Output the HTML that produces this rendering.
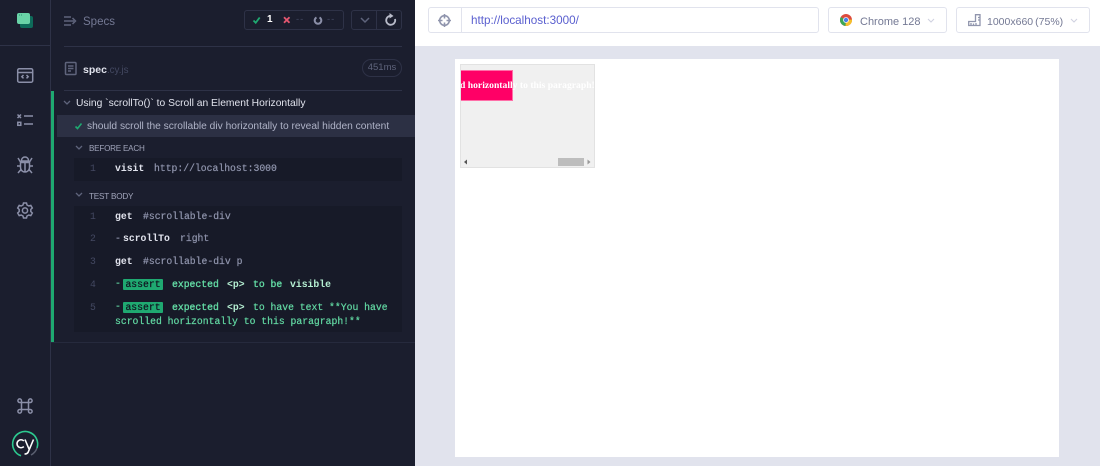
<!DOCTYPE html>
<html><head><meta charset="utf-8"><style>
*{box-sizing:border-box}
html,body{margin:0;padding:0}
body{width:1100px;height:466px;overflow:hidden;position:relative;background:#fff;font-family:"Liberation Sans",sans-serif}
#w{position:absolute;left:0;top:0;width:1100px;height:466px;overflow:hidden;background:#fff;filter:blur(.25px)}
.a{position:absolute;white-space:nowrap}
.m{font-family:"Liberation Mono",monospace;font-size:9.75px;line-height:12px;color:#9095ad;-webkit-text-stroke:.2px currentColor}
.b{font-weight:bold;color:#e1e3ed;-webkit-text-stroke:0}
.g{color:#62d9a3}
.gb{color:#62d9a3;-webkit-text-stroke:.35px #62d9a3}
.v{font-weight:bold;color:#b5efd2;-webkit-text-stroke:0}
.n{font-family:"Liberation Mono",monospace;font-size:9.75px;line-height:12px;color:#434861}
.tag{position:absolute;background:#1fa971;color:#10131f;border-radius:1px;font-family:"Liberation Mono",monospace;font-size:9.75px;line-height:11px;text-align:center;height:11px;width:40px;-webkit-text-stroke:.2px #10131f}
svg{position:absolute;overflow:visible}
</style></head><body><div id="w">
<div class="a" style="left:0;top:0;width:415px;height:466px;background:#1b1e2e"></div>
<div class="a" style="left:50px;top:0;width:1px;height:466px;background:#2e3247"></div>
<div class="a" style="left:0;top:45px;width:50px;height:1px;background:#2e3247"></div>
<div class="a" style="left:64px;top:46px;width:338px;height:1px;background:#2e3247"></div>
<div class="a" style="left:64px;top:90px;width:338px;height:1px;background:#2e3247"></div>
<div class="a" style="left:51px;top:91px;width:3px;height:251px;background:#1fa971"></div>
<div class="a" style="left:51px;top:342px;width:364px;height:1px;background:#262a3d"></div>
<svg style="left:0;top:0" width="50" height="466" fill="none">
<rect x="20" y="16" width="13" height="12" rx="2" fill="#0e6b5a"/><rect x="17" y="13" width="13" height="11" rx="2" fill="#69d3a7"/>
<path d="M19 15h4" stroke="#2a8f70" stroke-width="1" stroke-dasharray="1 1"/>
<g stroke="#8b8fa8" stroke-width="1.500"><rect x="17.700" y="68.700" width="15" height="13.500" rx="1.500"/><path d="M18 72.500H32M23.500 75l-1.700 1.700 1.700 1.700M26.500 75l1.700 1.700-1.700 1.700"/>
<path d="M17.500 114.500l3.500 3.500m0-3.500l-3.500 3.500M24 116H33M24 124H33"/><rect x="17.800" y="122.300" width="3" height="3"/>
<path d="M21.500 160.500a3.500 3.500 0 0 1 7 0v.5h-7zM20.500 162.500h9v5a4.500 4.500 0 0 1-9 0zM25 163v9M18 158l2.500 4M32 158l-2.500 4M17 166H20.500M29.500 166H33M18 173l3-3.500M32 173l-3-3.500"/>
<circle cx="25" cy="210.500" r="2.600"/><path d="M23.500 203h3l.5 2 1.800 1 2-.6 1.500 2.600-1.500 1.400v2.200l1.500 1.400-1.500 2.600-2-.6-1.800 1-.5 2h-3l-.5-2-1.800-1-2 .6-1.500-2.600 1.500-1.400v-2.200l-1.500-1.400 1.500-2.600 2 .6 1.800-1z"/>
<path d="M21.500 402.500h7v7h-7zM21.500 402.500v-1.700a1.800 1.800 0 1 0-1.800 1.700h1.800M28.500 402.500v-1.700a1.800 1.800 0 1 1 1.800 1.700h-1.800M21.500 409.500v1.700a1.800 1.800 0 1 1-1.800-1.700h1.800M28.500 409.500v1.700a1.800 1.800 0 1 0 1.800-1.700h-1.800"/></g>
<path d="M21 455.800A12.500 12.500 0 1 1 37 448" stroke="#2cc98f" stroke-width="1.600"/>
<path d="M37 448A12.500 12.500 0 0 1 31 455" stroke="#5a5f70" stroke-width="1.500"/>
<path d="M23.800 440.900a4 4 0 1 0 0 5.700" stroke="#fff" stroke-width="1.600"/>
<path d="M25 439.500L29 449M33.500 439.500L28 452.500Q27 454 24.500 454" stroke="#fff" stroke-width="1.600"/>
</svg>
<svg style="left:64px;top:16px" width="14" height="12" fill="none" stroke="#5f647c" stroke-width="1.500"><path d="M0 1H7M0 5H10M0 9H7M8.500 2l3 3-3 3"/></svg>
<div class="a" style="left:83px;top:15px;font-size:11.500px;line-height:15px;color:#747994">Specs</div>
<div class="a" style="left:244px;top:10px;width:100px;height:20px;border:1px solid #2e3247;border-radius:3px"></div>
<svg style="left:244px;top:10px" width="100" height="20" fill="none" stroke-width="1.800"><path d="M9.500 10.500l2.200 2.300 4-5.300" stroke="#1fa971"/><path d="M40 7.200l5.500 5.500m0-5.500l-5.500 5.500" stroke="#e45770"/><path d="M72.500 7.500a3.300 3.300 0 1 0 3 0" stroke="#8b8fa8" stroke-width="2"/></svg>
<div class="a" style="left:267px;top:14px;font-size:10px;font-weight:bold;line-height:12px;color:#fff">1</div>
<div class="a" style="left:296px;top:14px;font-size:9.500px;line-height:12px;letter-spacing:1px;color:#434861">--</div>
<div class="a" style="left:327px;top:14px;font-size:9.500px;line-height:12px;letter-spacing:1px;color:#434861">--</div>
<div class="a" style="left:351px;top:10px;width:51px;height:20px;border:1px solid #2e3247;border-radius:3px"></div>
<div class="a" style="left:376px;top:10px;width:1px;height:20px;background:#2e3247"></div>
<svg style="left:351px;top:10px" width="51" height="20" fill="none"><path d="M10 8l4 4 4-4" stroke="#5f647c" stroke-width="1.500"/><path d="M41 6a4.500 4.500 0 1 0 3 3" stroke="#b9bcca" stroke-width="1.800"/><path d="M38.500 3l4 3-4 2.500z" fill="#b9bcca"/></svg>
<svg style="left:65px;top:62px" width="12" height="13" fill="none" stroke="#5f647c" stroke-width="1.500"><rect x=".5" y=".5" width="10.500" height="12" rx="1"/><path d="M3 4H8.500M3 6.500H8.500M3 9H6"/></svg>
<div class="a" style="left:83px;top:62.500px;font-size:10.500px;line-height:14px;font-weight:bold;color:#e1e3ed">spec<span style="font-weight:normal;font-size:9.800px;color:#434861">.cy.js</span></div>
<div class="a" style="left:362px;top:59px;width:40px;height:18px;border:1px solid #2e3247;border-radius:9px;font-size:9.500px;line-height:16px;text-align:center;color:#5f647c">451ms</div>
<svg style="left:63px;top:100px" width="8" height="6" fill="none" stroke="#5f647c" stroke-width="1.300"><path d="M1 1l3 3 3-3"/></svg>
<div class="a" style="left:76px;top:97px;font-size:10.300px;line-height:14px;color:#e1e3ed">Using `scrollTo()` to Scroll an Element Horizontally</div>
<div class="a" style="left:57px;top:115px;width:358px;height:22px;background:#2c3044"></div>
<svg style="left:75px;top:122px" width="8" height="8" fill="none" stroke="#1fa971" stroke-width="1.600"><path d="M.5 4.500l2 2 4-5"/></svg>
<div class="a" style="left:87px;top:120px;font-size:10.230px;line-height:14px;color:#afb3c7">should scroll the scrollable div horizontally to reveal hidden content</div>
<svg style="left:75px;top:145px" width="8" height="6" fill="none" stroke="#5f647c" stroke-width="1.300"><path d="M1 1l3 3 3-3"/></svg>
<div class="a" style="left:89px;top:143px;font-size:8.100px;letter-spacing:-.22px;line-height:12px;color:#a0a4ba">BEFORE EACH</div>
<div class="a" style="left:74px;top:158px;width:328px;height:23px;background:#171a28"></div>
<div class="a n" style="left:90px;top:163px">1</div>
<div class="a m" style="left:115px;top:163px"><span class="b">visit</span></div>
<div class="a m" style="left:154px;top:163px">http://localhost:3000</div>
<svg style="left:75px;top:192px" width="8" height="6" fill="none" stroke="#5f647c" stroke-width="1.300"><path d="M1 1l3 3 3-3"/></svg>
<div class="a" style="left:89px;top:191px;font-size:8.200px;letter-spacing:-.22px;line-height:12px;color:#a0a4ba">TEST BODY</div>
<div class="a" style="left:74px;top:206px;width:328px;height:126px;background:#171a28"></div>
<div class="a n" style="left:90px;top:211px">1</div>
<div class="a m" style="left:115px;top:211px"><span class="b">get</span></div>
<div class="a m" style="left:143px;top:211px">#scrollable-div</div>
<div class="a n" style="left:90px;top:233px">2</div>
<div class="a m" style="left:115px;top:233px">-</div>
<div class="a m" style="left:123px;top:233px"><span class="b">scrollTo</span></div>
<div class="a m" style="left:180px;top:233px">right</div>
<div class="a n" style="left:90px;top:256px">3</div>
<div class="a m" style="left:115px;top:256px"><span class="b">get</span></div>
<div class="a m" style="left:143px;top:256px">#scrollable-div p</div>
<div class="a n" style="left:90px;top:279px">4</div>
<div class="a m g" style="left:115px;top:278px">-</div>
<div class="tag" style="left:123px;top:279px">assert</div>
<div class="a m gb" style="left:172px;top:279px">expected</div>
<div class="a m v" style="left:227px;top:279px">&lt;p&gt;</div>
<div class="a m gb" style="left:253px;top:279px">to be</div>
<div class="a m v" style="left:290px;top:279px">visible</div>
<div class="a n" style="left:90px;top:302px">5</div>
<div class="a m g" style="left:115px;top:301px">-</div>
<div class="tag" style="left:123px;top:302px">assert</div>
<div class="a m gb" style="left:172px;top:302px">expected</div>
<div class="a m v" style="left:227px;top:302px">&lt;p&gt;</div>
<div class="a m g" style="left:253px;top:302px">to have text **You have</div>
<div class="a m g" style="left:115px;top:316px">scrolled horizontally to this paragraph!**</div>

<div class="a" style="left:415px;top:46px;width:685px;height:420px;background:#e1e3ed"></div>
<div class="a" style="left:455px;top:59px;width:604px;height:398px;background:#fff"></div>
<div class="a" style="left:428px;top:7px;width:391px;height:26px;border:1px solid #e1e3ed;border-radius:3px;background:#fff"></div>
<div class="a" style="left:461px;top:8px;width:1px;height:24px;background:#e1e3ed"></div>
<svg style="left:438px;top:14px" width="13" height="13" fill="none" stroke="#9095ad" stroke-width="1.600"><circle cx="6.500" cy="6.500" r="4.800"/><path d="M6.500 0V4.500M6.500 8.500V13M0 6.500H4.500M8.500 6.500H13"/></svg>
<div class="a" style="left:471px;top:14px;font-size:11.700px;line-height:14px;color:#5a5fcf">http://localhost:3000/</div>
<div class="a" style="left:828px;top:7px;width:119px;height:26px;border:1px solid #e1e3ed;border-radius:3px"></div>
<svg style="left:840px;top:14px" width="12" height="12"><circle cx="6" cy="6" r="6" fill="#dd4b3e"/><path d="M6 6L.8 3A6 6 0 0 0 5.500 12z" fill="#3aa757"/><path d="M6 6L12 5.500A6 6 0 0 1 5.500 12z" fill="#f5c02c"/><circle cx="6" cy="6" r="2.900" fill="#fff"/><circle cx="6" cy="6" r="2.200" fill="#4a80e8"/></svg>
<div class="a" style="left:860px;top:15px;font-size:11px;line-height:14px;color:#747994">Chrome 128</div>
<svg style="left:927px;top:18px" width="8" height="6" fill="none" stroke="#d0d2e0" stroke-width="1.100"><path d="M1 1l3 3 3-3"/></svg>
<div class="a" style="left:956px;top:7px;width:134px;height:26px;border:1px solid #e1e3ed;border-radius:3px"></div>
<svg style="left:968px;top:14px" width="13" height="12" fill="none" stroke="#9095ad" stroke-width="1.300"><path d="M7.500.7H12V11.500H.7V7.500H7.500zM3 11V9M5.500 11V9.500M8 11V9M10 3.500H12M10 6H12"/></svg>
<div class="a" style="left:987px;top:15px;font-size:10.500px;line-height:14px;color:#747994">1000x660<span style="margin-left:2px">(75%)</span></div>
<svg style="left:1070px;top:18px" width="8" height="6" fill="none" stroke="#d0d2e0" stroke-width="1.100"><path d="M1 1l3 3 3-3"/></svg>

<div class="a" style="left:460px;top:64px;width:135px;height:104px;background:#f0f0f0;border:1px solid #e2e2e2;overflow:hidden">
<div class="a" style="left:0;top:5px;width:52px;height:31px;background:#ff0066;border:1px solid #ff6fa8;border-width:1px 1px 1px 0"></div>
<div class="a" style="left:-1px;top:15px;font-family:'Liberation Serif',serif;font-weight:bold;font-size:9.650px;line-height:12px;color:#fff">d horizontally to this paragraph!</div>
<div class="a" style="left:97px;top:93px;width:26px;height:8px;background:#bdbdbd"></div>
<svg style="left:0;top:0" width="134" height="102"><path d="M6 94.500V99.500L3 97z" fill="#555"/><path d="M126.500 94.500V99.500L129.500 97z" fill="#999"/></svg>
</div>
</div></body></html>
